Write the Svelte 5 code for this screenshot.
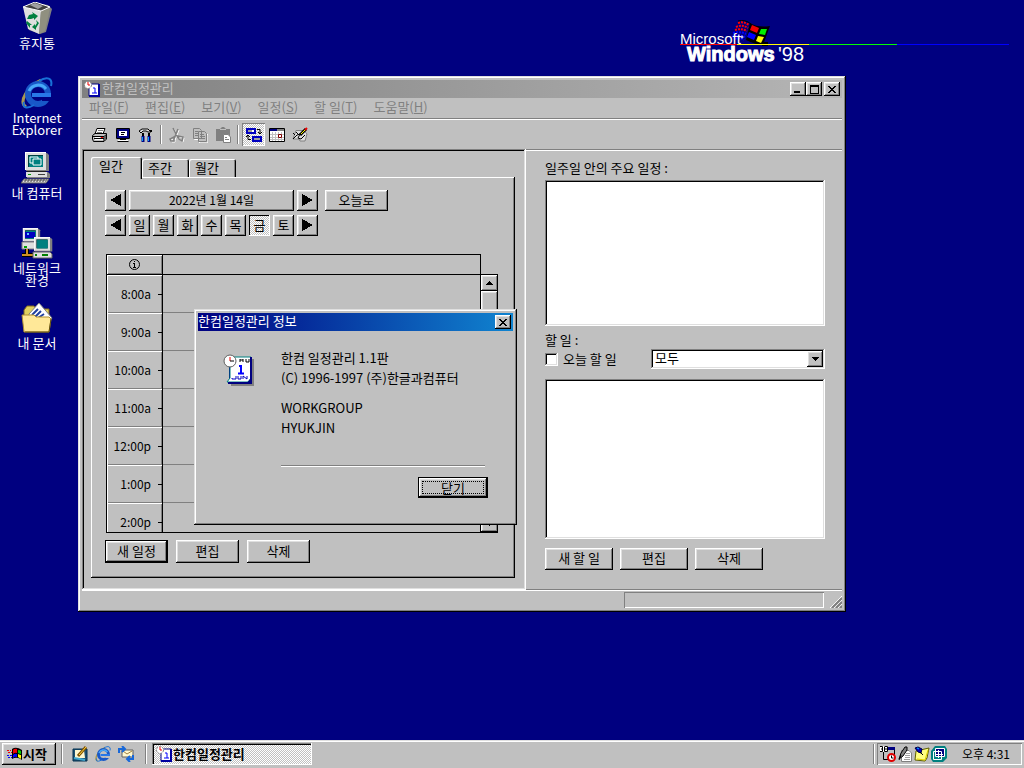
<script lang="ts">
	type Shortcut = { icon: string; label: string };

	const shortcuts: Shortcut[] = [
		{ icon: 'bin', label: '휴지통' },
		{ icon: 'ie', label: 'Internet Explorer' },
		{ icon: 'computer', label: '내 컴퓨터' },
		{ icon: 'network', label: '네트워크 환경' },
		{ icon: 'documents', label: '내 문서' }
	];

	const menus = [
		{ label: '파일', key: 'F' },
		{ label: '편집', key: 'E' },
		{ label: '보기', key: 'V' },
		{ label: '일정', key: 'S' },
		{ label: '할 일', key: 'T' },
		{ label: '도움말', key: 'H' }
	];

	const toolGroups = [
		['print', 'screen', 'tools'],
		['cut', 'copy', 'paste'],
		['swap', 'calendar', 'memo']
	];

	const largeIcons = ['ie', 'bin', 'computer', 'network', 'documents', 'planner'];
	const tabs = ['일간', '주간', '월간'];
	const days = ['일', '월', '화', '수', '목', '금', '토'];
	const hours = ['8:00a', '9:00a', '10:00a', '11:00a', '12:00p', '1:00p', '2:00p'];
	const quickLaunch = ['desk', 'ie', 'mail'];
	const tray = ['scheduler', 'pen', 'note', 'display'];

	let activeTab = $state('일간');
	let activeDay = $state('금');
	let todayOnly = $state(false);
	let filter = $state('모두');
	let showAbout = $state(true);
</script>

{#snippet pc()}
	<path d="M5 1H26L28 3V19H5Z" fill="#808080" />
	<path d="M4 0H25V18H4Z" fill="#dfdfdf" />
	<path d="M4 0H25V1H5V18H4Z" fill="#fff" />
	<path d="M7 3H22V15H7Z" fill="#004040" />
	<path d="M8 4H22V15H8Z" fill="#008080" />
{/snippet}

{#snippet icon(name: string, size: number)}
	<svg width={size} height={size} viewBox={largeIcons.includes(name) ? '0 0 32 32' : '0 0 16 16'} aria-hidden="true">
		{#if name === 'bin'}
			<path d="M5 6L14 1L27 3L31 7L25 30L19 32L8 28Z" fill="#808080" />
			<path d="M2 5L20 9L18 32L7 27Z" fill="#dfdfdf" />
			<path d="M20 9L29 6L24 29L18 32Z" fill="#909080" />
			<path d="M2 5L14 0L29 5L20 9Z" fill="#404040" stroke="#fff" />
			<path d="M9 3L14 1L22 4L17 7Z" fill="#a0a0a0" />
			<path d="M6 17L8 13L12 12L11 10L17 14L13 18V16L10 17Z M6 19L11 23H9V26L5 21Z M15 18L18 21L15 26V28L11 25L14 22V24L16 21Z" fill="#008040" />
		{:else if name === 'ie'}
			<path d="M5 30C-3 25 7 9 20 3" fill="none" stroke="#a89850" stroke-width="3" />
			<circle cx="17" cy="17" r="10" fill="none" stroke="#1858c8" stroke-width="6" />
			<path d="M8 14A10 10 0 0 1 25 12" fill="none" stroke="#48a8f8" stroke-width="3" />
			<path d="M11 18H30" stroke="#2878e8" stroke-width="4" />
			<path d="M21 20H31V24H21Z" fill={size > 16 ? '#000080' : '#c0c0c0'} />
			<path d="M18 4C26 -1 32 1 30 9M3 25C1 31 6 32 13 28" fill="none" stroke="#1870d8" stroke-width="2" />
		{:else if name === 'computer'}
			{@render pc()}
			<path d="M9 5H17V11H9Z" fill="#008080" stroke="#fff" />
			<path d="M12 7H20V13H12Z" fill="#008080" stroke="#fff" />
			<path d="M6 19H25V20H6Z" fill="#202020" />
			<path d="M6 20H27L29 22V26H6Z" fill="#808080" />
			<path d="M5 20H26V25H5Z" fill="#dfdfdf" />
			<path d="M7 22H10V23H7Z" fill="#00a000" />
			<path d="M17 22H24V23H17Z" fill="#404040" />
			<path d="M3 27H28L25 31H0Z" fill="#dfdfdf" stroke="#606060" />
			<path d="M3 29H25M4 28H26" stroke="#404040" stroke-dasharray="2 1" />
		{:else if name === 'network'}
			<g transform="translate(-1 1) scale(.72)">{@render pc()}</g>
			<path d="M4 5H14V11H4Z" fill="#0000c0" />
			<path d="M6 6H8V8H6Z" fill="#60c0ff" />
			<path d="M1 15H18V22H1Z" fill="#dfdfdf" stroke="#808080" />
			<path d="M3 19H6V21H3Z" fill="#00a000" />
			<path d="M6 22V28M1 28H13" stroke="#000" stroke-width="4" />
			<path d="M6 22V28M1 28H13" stroke="#d09020" stroke-width="2" />
			<g transform="translate(10 10) scale(.76)">{@render pc()}</g>
			<path d="M12 25H29L31 27V31H12Z" fill="#dfdfdf" stroke="#606060" />
			<path d="M21 28H27M14 28H16" stroke="#008000" stroke-width="2" />
		{:else if name === 'documents'}
			<path d="M3 8L6 4H13L15 7H28V26H3Z" fill="#e0d060" stroke="#806820" />
			<path d="M8 12L18 1L31 16L25 24H8Z" fill="#fff" stroke="#808080" />
			<path d="M11 13L17 7M14 15L20 9M17 16L23 12" stroke="#2040a0" stroke-width="2" />
			<path d="M1 13H13L15 15H28L30 17L28 30H3Z" fill="#ffe898" stroke="#b09030" />
			<path d="M4 30H28L30 17" fill="none" stroke="#605010" />
		{:else if name === 'planner'}
			<path d="M8 5H31V32H8Z" fill="#808080" />
			<path d="M6 4H29V30H6Z" fill="#000080" />
			<path d="M7 3H28V24L25 28H4L7 24Z" fill="#fff" stroke="#008080" />
			<path d="M28 3V26L25 29H5" fill="none" stroke="#000080" stroke-width="2" />
			<path d="M17 5V8M20 5V8M17 6H20M23 5V8H26V5" fill="none" stroke="#000" />
			<path d="M16 12H18V19M15 19.5H21M18 11V19" fill="none" stroke="#0000ff" stroke-width="2" />
			<path d="M13 22V25H9V24M15 22V25H18V22M20 25V22L24 25V22" fill="none" stroke="#0000c0" />
			<circle cx="7" cy="7" r="6" fill="#fff" stroke="#606060" />
			<path d="M7 3V7" stroke="#f00000" />
			<path d="M7 7H11" stroke="#000" />
		{:else if name === 'planner16'}
			<path d="M5 3H15V15H5Z" fill="#fff" stroke="#000080" />
			<path d="M15 3V15H5" fill="none" stroke="#0000a0" stroke-width="2" />
			<path d="M9 7H11V12M8 12H13" fill="none" stroke="#0000ff" />
			<circle cx="4" cy="4" r="3.5" fill="#fff" stroke="#808080" stroke-dasharray="2 1" />
			<path d="M4 1V4H6" fill="none" stroke="#f00000" />
		{:else if name === 'flag'}
			<path d="M6 3Q10 0 16 4V14Q11 10 6 13Z" fill="#000" />
			<path d="M7 4Q9 2 11 3V7Q9 6 7 8Z" fill="#f00000" />
			<path d="M12 4Q14 4 15 5V8Q14 8 12 7Z" fill="#00d000" />
			<path d="M7 9Q9 7 11 8V11Q9 10 7 12Z" fill="#0000ff" />
			<path d="M12 8Q14 9 15 9V13L12 11Z" fill="#ffff00" />
			<path d="M1 4.5H5M2 6.5H6" stroke="#f00000" stroke-dasharray="2 1" />
			<path d="M1 9.5H6M2 11.5H6" stroke="#0000ff" stroke-dasharray="2 1" />
		{:else if name === 'print'}
			<path d="M5 1.5H13L11 7H3Z" fill="#fff" stroke="#000" />
			<path d="M6 3.5H11M5 5.5H10" stroke="#808080" />
			<path d="M.5 8.5L3 6.5H14.5V12L12 14.5H1.5L.5 12Z" fill="#c0c0c0" stroke="#000" />
			<path d="M1 9.5H12L15 7M12 10V14M2 11.5H12M14 9V12" fill="none" stroke="#000" />
			<path d="M3 10.5H8M3 12.5H11" stroke="#fff" />
			<path d="M9 10.5H11" stroke="#ff0000" />
		{:else if name === 'screen'}
			<path d="M1.5 1.5H14.5V11.5H1.5Z" fill="#fff" stroke="#000" />
			<path d="M3 3H13V10H3Z" fill="#fff" stroke="#000080" stroke-width="2" />
			<path d="M6 5.5H10M6 7.5H9" stroke="#000" />
			<path d="M5 12.5H11M2.5 14.5H13.5" stroke="#000" />
			<path d="M3 13.5H13" stroke="#fff" />
		{:else if name === 'tools'}
			<path d="M1 4L4 2H10L13 5L10 5L8 4H5L3 6Z" fill="#dfdfdf" stroke="#000" />
			<path d="M5 6V10M11 6V10M13 3V5" stroke="#000" stroke-width="2" />
			<path d="M5 9V15M11 9V15" stroke="#000080" stroke-width="3" />
			<path d="M4.5 10V14M10.5 10V14" stroke="#00a0ff" />
		{:else if name === 'cut'}
			<g fill="none" stroke="#fff" transform="translate(1 1)">
				<path d="M4 1L9 11M9 2L5 12M5 10L1 12L2 14H5ZM9 9L14 10L13 14L10 12Z" />
			</g>
			<path d="M4 1L9 11M9 2L5 12M5 10L1 12L2 14H5ZM9 9L14 10L13 14L10 12Z" fill="none" stroke="#808080" stroke-width="1.5" />
		{:else if name === 'copy'}
			<path d="M2.5 2.5H8.5L10.5 4.5V12.5H2.5ZM7.5 5.5H13L16 8V16H7.5Z" fill="#c0c0c0" stroke="#fff" />
			<path d="M1.5 1.5H7.5L9.5 3.5V11.5H1.5ZM6.5 4.5H12.5L14.5 6.5V14.5H6.5Z" fill="#c0c0c0" stroke="#808080" />
			<path d="M3 4.5H6M3 6.5H6M3 8.5H6M8 7.5H12M8 9.5H13M8 11.5H13" stroke="#808080" />
		{:else if name === 'paste'}
			<path d="M1 2H5L7 0H9L11 2H15V14H1Z" fill="#808080" />
			<path d="M5 2.5H11" stroke="#c0c0c0" />
			<path d="M8.5 7.5H13L15.5 10V15.5H8.5Z" fill="#fff" stroke="#808080" />
			<path d="M10 10.5H12M10 12.5H14" stroke="#808080" />
		{:else if name === 'swap'}
			<path d="M1 2H9V6H1ZM7 10H15V14H7Z" fill="#fff" stroke="#0000c0" stroke-width="2" />
			<path d="M2 3H6V5H2ZM8 11H14V13H8Z" fill="#a0a0a0" />
			<path d="M11 2.5H14V6M12 5L14 7L16 5M5 12.5H2V9M0 10L2 8L4 10" fill="none" stroke="#000" />
		{:else if name === 'calendar'}
			<path d="M.5 1.5H15.5V14.5H.5Z" fill="#fff" stroke="#000" />
			<path d="M1 2H8V4H1Z" fill="#000080" />
			<path d="M8 2H15V4H8Z" fill="#808080" />
			<path d="M3.5 5V14M6.5 5V14M9.5 5V14M12.5 5V14M1 7.5H15M1 10.5H15M1 12.5H15" stroke="#c0c0c0" />
			<path d="M9.5 7.5H12.5V10.5H9.5Z" fill="#fff" stroke="#800000" />
		{:else if name === 'memo'}
			<path d="M4 3.5H12L15 7L13 14H8L7 12H1Z" fill="#dfdfdf" stroke="#808080" />
			<path d="M1 12L5 8L8 7L6 11L9 12L13 8" fill="none" stroke="#000" />
			<path d="M8 8L14 2" stroke="#000" stroke-width="3" />
			<path d="M9 7L14 2" stroke="#ffff00" />
			<path d="M13 3L15 1" stroke="#f00000" stroke-width="2" />
			<path d="M1 6L3 8M4 5L6 7" stroke="#000" />
		{:else if name === 'desk'}
			<path d="M1 3H15V15H1Z" fill="#205070" stroke="#003050" />
			<path d="M3 4H12L13 12H3Z" fill="#fff8d0" />
			<path d="M2 12L13 14" stroke="#40a8d0" stroke-width="2" />
			<path d="M6 10L14 1" stroke="#805000" stroke-width="3" />
			<path d="M7 9L14 1" stroke="#ffd840" />
		{:else if name === 'mail'}
			<path d="M4 4H15V11H4Z" fill="#fff8d0" stroke="#606060" />
			<path d="M5 5L9 8L14 5" fill="none" stroke="#a08040" />
			<path d="M1 7V3H6M4 0L7 3L4 6M15 9V13H10M12 10L9 13L12 16" fill="none" stroke="#1868d8" stroke-width="2" />
		{:else if name === 'scheduler'}
			<path d="M3.5 3.5H14.5V13.5H3.5Z" fill="#c0c0c0" stroke="#000" />
			<path d="M7 1H15V4H7Z" fill="#000080" />
			<path d="M0 0H8V6H0Z" fill="#fff" />
			<path d="M0 .5H2.5V5.5H0M1 3H2M5 .5H7.5V5.5H4.5V.5M5 3H7" fill="none" stroke="#000" />
			<circle cx="11.5" cy="11.5" r="3.5" fill="#fff" stroke="#e00000" stroke-width="2" />
			<path d="M11.5 9.5V12H13.5" fill="none" stroke="#000" />
		{:else if name === 'pen'}
			<path d="M4.5 4.5H12L14.5 7V15.5H4.5Z" fill="#fff" stroke="#808080" />
			<path d="M9 7.5H13M8 9.5H13M8 11.5H13M7 13.5H13" stroke="#a0a0a0" />
			<path d="M2 13L4 7L8 1H10V4L6 10Z" fill="#808080" stroke="#000" />
			<path d="M2 14L4 9" stroke="#000" />
		{:else if name === 'note'}
			<path d="M2 5L15 2L13 12L11 15L1 14Z" fill="#ffff80" stroke="#606000" />
			<path d="M3 13L11 14L14 4" fill="none" stroke="#e0d000" />
			<path d="M1 2L4 1L8 3L7 7L4 6Z" fill="#0000c0" stroke="#000040" />
			<path d="M3 2L5 3" stroke="#00c0ff" />
			<path d="M6 6L9 9" stroke="#000" />
		{:else if name === 'display'}
			<path d="M4 0H14L16 3V12L12 16H2L0 13V5Z" fill="#008080" />
			<path d="M4.5 2.5H13.5V10.5H4.5Z" fill="#000080" stroke="#fff" />
			<path d="M2.5 5.5H10.5V13.5H2.5Z" fill="none" stroke="#fff" />
			<path d="M7.5 4V12M4 8.5H12" stroke="#fff" />
		{/if}
	</svg>
{/snippet}

{#snippet arrow(dir: 'left' | 'right')}
	<svg width="11" height="12" viewBox="0 0 11 12" shape-rendering="crispEdges" aria-hidden="true">
		<path d={dir === 'left' ? 'M11 0V12L0 6Z' : 'M0 0V12L11 6Z'} />
	</svg>
{/snippet}

{#snippet smallArrow(dir: 'up' | 'down')}
	<svg width="7" height="4" viewBox="0 0 7 4" shape-rendering="crispEdges" aria-hidden="true">
		<path d={dir === 'up' ? 'M3 0H4V1H5V2H6V3H7V4H0V3H1V2H2V1H3Z' : 'M0 0H7V1H6V2H5V3H4V4H3V3H2V2H1V1H0Z'} />
	</svg>
{/snippet}

{#snippet cross()}
	<svg width="8" height="7" viewBox="0 0 8 7" shape-rendering="crispEdges" aria-hidden="true">
		<path d="M0 0H2V1H3V2H5V1H6V0H8V1H7V2H6V3H5V4H6V5H7V6H8V7H6V6H5V5H3V6H2V7H0V6H1V5H2V4H3V3H2V2H1V1H0Z" />
	</svg>
{/snippet}

<div class="screen">
	<main class="desktop">
		<nav class="shortcuts" aria-label="바탕 화면">
			{#each shortcuts as item}
				<a class="shortcut" href="#{item.icon}">
					{@render icon(item.icon, 32)}
					<span>{item.label}</span>
				</a>
			{/each}
		</nav>

		<svg class="wallpaper" width="330" height="46" viewBox="0 0 330 46">
			<path d="M58 3Q64 1 69 5M56 7Q62 4 68 8M55 10Q61 8 67 11" fill="none" stroke="#ff0000" stroke-width="2" stroke-dasharray="2 1" />
			<path d="M53 13Q60 11 66 14M52 17Q59 14 65 17M55 19Q60 17 64 20" fill="none" stroke="#0000ff" stroke-width="2" stroke-dasharray="2 1" />
			<path d="M70 3Q78 8 90 6L83 25Q76 25 66 20Z" fill="#000" />
			<path d="M58 1Q65 -1 71 4" fill="none" stroke="#000" />
			<path d="M72 5L79 8L77 13L70 10Z" fill="#f00000" />
			<path d="M81 9H87L85 15L79 14Z" fill="#00f000" />
			<path d="M69 12L76 15L74 20L67 17Z" fill="#0000ff" />
			<path d="M78 16L84 17L81 23L76 21Z" fill="#ffff00" />
			<path d="M82 22H88V26H82Z" fill="#000" />
			<text class="brand" x="0" y="24">Microsoft</text>
			<circle cx="62" cy="17" r="1" fill="none" stroke="#fff" />
			<g shape-rendering="crispEdges">
				<path d="M0 24.5H57" stroke="#ff0000" />
				<path d="M57 24.5H129" stroke="#ffff00" />
				<path d="M129 24.5H217" stroke="#00ff00" />
				<path d="M217 24.5H329" stroke="#0000ff" />
			</g>
			<text class="product" x="7" y="41">Windows</text>
			<text class="edition" x="98" y="41">'98</text>
		</svg>

		<section class="window planner" aria-label="한컴일정관리">
			<header class="titlebar inactive">
				{@render icon('planner16', 16)}
				<h1>한컴일정관리</h1>
				<div class="controls">
					<button class="control" aria-label="최소화">
						<svg width="8" height="7" shape-rendering="crispEdges"><path d="M0 5H6V7H0Z" /></svg>
					</button>
					<button class="control" aria-label="최대화">
						<svg width="9" height="9" shape-rendering="crispEdges"><path d="M0 0H9V9H0ZM1 2V8H8V2Z" fill-rule="evenodd" /></svg>
					</button>
					<button class="control close" aria-label="닫기">{@render cross()}</button>
				</div>
			</header>

			<div class="menubar">
				{#each menus as menu}
					<button class="menu">{menu.label}(<u>{menu.key}</u>)</button>
				{/each}
			</div>

			<div class="toolbar">
				{#each toolGroups as group, i}
					{#if i > 0}<span class="separator"></span>{/if}
					<div class="tool-group">
						{#each group as tool}
							<button class="tool" class:pressed={tool === 'swap'} aria-label={tool}>
								{@render icon(tool, 16)}
							</button>
						{/each}
					</div>
				{/each}
			</div>

			<div class="panes">
				<section class="pane-left">
					<div class="tabs" role="tablist">
						{#each tabs as tab}
							<button class="tab" class:active={tab === activeTab} role="tab" aria-selected={tab === activeTab} onclick={() => (activeTab = tab)}>
								{tab}
							</button>
						{/each}
					</div>
					<div class="page">
						<div class="date-row">
							<button class="btn square" aria-label="이전 날">{@render arrow('left')}</button>
							<button class="btn date">2022년 1월 14일</button>
							<button class="btn square" aria-label="다음 날">{@render arrow('right')}</button>
							<button class="btn today">오늘로</button>
						</div>
						<div class="date-row">
							<button class="btn square" aria-label="이전 주">{@render arrow('left')}</button>
							{#each days as day}
								<button class="btn square" class:pressed={day === activeDay} onclick={() => (activeDay = day)}>{day}</button>
							{/each}
							<button class="btn square" aria-label="다음 주">{@render arrow('right')}</button>
						</div>

						<div class="schedule">
							<div class="sheet">
								<table>
									<thead>
										<tr>
											<th class="time-head">
												<svg width="11" height="11" viewBox="0 0 11 11" aria-hidden="true">
													<circle cx="5.5" cy="5.5" r="5" fill="none" stroke="#000" />
													<path d="M5 2H6V3H5ZM4 4H6V8H7V9H4V8H5V5H4Z" />
												</svg>
											</th>
											<th></th>
										</tr>
									</thead>
									<tbody>
										{#each hours as hour}
											<tr>
												<th scope="row" class="time"><div>{hour}<i></i></div></th>
												<td></td>
											</tr>
										{/each}
									</tbody>
								</table>
							</div>
							<div class="scrollbar">
								<button class="scroll-btn" aria-label="위로">{@render smallArrow('up')}</button>
								<span class="thumb"></span>
								<span class="track"></span>
								<button class="scroll-btn" aria-label="아래로">{@render smallArrow('down')}</button>
							</div>
						</div>

						<div class="actions">
							<button class="btn default">새 일정</button>
							<button class="btn">편집</button>
							<button class="btn">삭제</button>
						</div>
					</div>
				</section>

				<section class="pane-right">
					<h2 id="week-label">일주일 안의 주요 일정 :</h2>
					<div class="list week" role="listbox" aria-labelledby="week-label" tabindex="0"></div>
					<h2 id="todo-label">할 일 :</h2>
					<div class="filter-row">
						<label class="check">
							<input type="checkbox" bind:checked={todayOnly} />
							오늘 할 일
						</label>
						<div class="combo">
							<select bind:value={filter} aria-labelledby="todo-label">
								<option>모두</option>
							</select>
							<span class="combo-arrow">{@render smallArrow('down')}</span>
						</div>
					</div>
					<div class="list todo" role="listbox" aria-labelledby="todo-label" tabindex="0"></div>
					<div class="actions">
						<button class="btn">새 할 일</button>
						<button class="btn">편집</button>
						<button class="btn">삭제</button>
					</div>
				</section>
			</div>

			<footer class="statusbar">
				<span class="status-cell"></span>
				<svg width="12" height="12" viewBox="0 0 12 12" aria-hidden="true">
					<path d="M0 12L12 0M4 12L12 4M8 12L12 8" stroke="#fff" />
					<path d="M2 12L12 2M6 12L12 6M10 12L12 10" stroke="#808080" stroke-width="2" />
				</svg>
			</footer>
		</section>

		{#if showAbout}
			<div class="window about" role="dialog" aria-label="한컴일정관리 정보">
				<header class="titlebar">
					<h1>한컴일정관리 정보</h1>
					<div class="controls">
						<button class="control" aria-label="닫기" onclick={() => (showAbout = false)}>{@render cross()}</button>
					</div>
				</header>
				<div class="about-body">
					<div class="about-icon">{@render icon('planner', 32)}</div>
					<div class="about-info">
						<p>한컴 일정관리 1.1판<br />(C) 1996-1997 (주)한글과컴퓨터</p>
						<p>WORKGROUP<br />HYUKJIN</p>
						<hr />
						<button class="btn default ok" onclick={() => (showAbout = false)}><span>닫기</span></button>
					</div>
				</div>
			</div>
		{/if}
	</main>

	<footer class="taskbar">
		<button class="start btn">{@render icon('flag', 16)}시작</button>
		<span class="handle"></span>
		<div class="quick">
			{#each quickLaunch as item}
				<button class="quick-item" aria-label={item}>{@render icon(item, 16)}</button>
			{/each}
		</div>
		<span class="handle"></span>
		<button class="task">{@render icon('planner16', 16)}한컴일정관리</button>
		<span class="handle tray-handle"></span>
		<div class="tray">
			{#each tray as item}
				{@render icon(item, 16)}
			{/each}
			<time>오후 4:31</time>
		</div>
	</footer>
</div>

<style>
	:global(body) {
		background: #000080;
	}

	.screen {
		--face: #c0c0c0;
		--raised: inset -1px -1px #000, inset 1px 1px #fff, inset -2px -2px #808080, inset 2px 2px #dfdfdf;
		--sunken: inset -1px -1px #fff, inset 1px 1px #808080, inset -2px -2px #dfdfdf, inset 2px 2px #000;
		--checker: repeating-conic-gradient(#fff 0 25%, #c0c0c0 0 50%) 0 0 / 2px 2px;
		display: flex;
		flex-direction: column;
		min-height: 100vh;
		font: 13px/16px 'Noto Sans CJK KR', sans-serif;
		color: #000;
	}

	button,
	select {
		font: inherit;
		color: inherit;
		border: 0;
		padding: 0;
		background: none;
	}

	h1,
	h2,
	p {
		margin: 0;
		font: inherit;
	}

	svg {
		display: block;
		flex: none;
	}

	.desktop {
		position: relative;
		flex: 1;
		min-height: 612px;
	}

	.shortcuts {
		display: grid;
		grid-auto-rows: 75px;
		width: 74px;
		padding-top: 2px;
	}

	.shortcut {
		display: flex;
		flex-direction: column;
		align-items: center;
		gap: 3px;
		padding: 0 8px;
		color: #fff;
		line-height: 12px;
		text-align: center;
		text-decoration: none;
		word-break: keep-all;
	}

	.wallpaper {
		position: absolute;
		top: 20px;
		right: 14px;
		fill: #fff;
		font-family: 'Liberation Sans', sans-serif;
	}

	.brand {
		font-size: 15px;
	}

	.product {
		font-size: 20px;
		font-weight: bold;
		stroke: #fff;
	}

	.edition {
		font-size: 20px;
	}

	.window {
		position: absolute;
		box-sizing: border-box;
		padding: 4px;
		background: var(--face);
		box-shadow: inset -1px -1px #000, inset 1px 1px #dfdfdf, inset -2px -2px #808080, inset 2px 2px #fff;
	}

	.planner {
		top: 76px;
		left: 78px;
		right: 178px;
		min-width: 720px;
	}

	.titlebar {
		display: flex;
		align-items: center;
		height: 18px;
		padding-right: 2px;
		background: linear-gradient(90deg, #000080, #1084d0);
		color: #fff;
	}

	.titlebar h1 {
		padding-bottom: 2px;
	}

	.titlebar.inactive {
		gap: 2px;
		padding-left: 2px;
		background: linear-gradient(90deg, #808080, #b5b5b5);
		color: #c0c0c0;
	}

	.controls {
		display: flex;
		margin-left: auto;
	}

	.control {
		display: grid;
		place-items: center;
		width: 16px;
		height: 14px;
		background: var(--face);
		box-shadow: var(--raised);
	}

	.control.close {
		margin-left: 2px;
	}

	.menubar {
		display: flex;
		gap: 4px;
		height: 20px;
		padding-left: 1px;
		border-bottom: 1px solid #808080;
	}

	.menu {
		padding: 0 6px 2px;
		color: #808080;
	}

	.toolbar {
		display: flex;
		align-items: center;
		gap: 3px;
		height: 29px;
		padding-left: 6px;
		border-top: 1px solid #fff;
	}

	.tool-group {
		display: flex;
	}

	.tool {
		display: grid;
		place-items: center;
		width: 23px;
		height: 23px;
	}

	.tool.pressed {
		background: var(--checker);
		box-shadow: inset 1px 1px #808080, inset -1px -1px #fff;
	}

	.separator {
		width: 1px;
		height: 19px;
		border-left: 1px solid #808080;
		background: #fff;
	}

	.panes {
		display: grid;
		grid-template-columns: 444fr 316fr;
	}

	.pane-left {
		padding: 8px 11px 12px 9px;
		box-shadow: var(--sunken);
	}

	.tabs {
		display: flex;
		align-items: flex-end;
		height: 22px;
		margin-bottom: -2px;
		position: relative;
	}

	.tab {
		width: 47px;
		height: 18px;
		padding-left: 6px;
		text-align: left;
		background: var(--face);
		border-radius: 2px 2px 0 0;
		box-shadow: inset 1px 1px #fff, inset -1px 0 #000, inset -2px 0 #808080;
		margin-bottom: 2px;
	}

	.tab.active {
		width: 51px;
		height: 22px;
		padding: 0 0 4px 8px;
		margin-bottom: 0;
	}

	.page {
		padding: 13px 17px 15px 14px;
		box-shadow: inset -1px -1px #000, inset 1px 1px #fff, inset -2px -2px #808080;
	}

	.date-row {
		display: flex;
		gap: 3px;
		margin-bottom: 4px;
	}

	.btn {
		box-sizing: border-box;
		background: var(--face);
		box-shadow: var(--raised);
	}

	.btn.square {
		display: grid;
		place-items: center;
		width: 21px;
		height: 21px;
		padding-bottom: 2px;
	}

	.btn.pressed {
		background: var(--checker);
		box-shadow: inset -1px -1px #fff, inset 1px 1px #000;
	}

	.btn.date {
		width: 165px;
		padding-bottom: 2px;
		font-size: 12px;
	}

	.btn.today {
		width: 63px;
		margin-left: 4px;
		padding-bottom: 2px;
	}

	.schedule {
		display: flex;
		height: 279px;
		margin: 18px 0 7px;
		padding-left: 1px;
	}

	.sheet {
		flex: 1;
		box-sizing: border-box;
		overflow: hidden;
		border: 1px solid #000;
	}

	table {
		width: 100%;
		border-collapse: separate;
		border-spacing: 0;
		table-layout: fixed;
	}

	th,
	td {
		box-sizing: border-box;
		padding: 0;
		font-weight: normal;
	}

	thead th {
		height: 20px;
		border-bottom: 1px solid #000;
	}

	.time-head,
	.time {
		width: 56px;
		border-right: 1px solid #000;
		box-shadow: inset 1px 1px #fff, inset -1px -1px #808080;
	}

	.time-head svg {
		margin: auto;
	}

	.time,
	td {
		height: 38px;
	}

	td {
		border-bottom: 1px solid #808080;
	}

	.time div {
		display: flex;
		align-items: center;
		justify-content: flex-end;
		gap: 7px;
		font-size: 12px;
	}

	.time i {
		width: 4px;
		height: 1px;
		background: #000;
	}

	.scrollbar {
		display: flex;
		flex-direction: column;
		width: 17px;
		margin-top: 20px;
		background: #dfdfdf;
		box-shadow: inset -1px -1px #000, inset 0 1px #000;
		padding: 1px 0;
		box-sizing: border-box;
	}

	.scroll-btn {
		display: grid;
		place-items: center;
		height: 16px;
		background: var(--face);
		box-shadow: var(--raised);
	}

	.thumb {
		height: 60px;
		background: var(--face);
		box-shadow: var(--raised);
	}

	.track {
		flex: 1;
	}

	.actions {
		display: flex;
		gap: 8px;
	}

	.actions .btn {
		width: 63px;
		height: 23px;
		padding-bottom: 2px;
	}

	.btn.default {
		border: 1px solid #000;
	}

	.pane-right {
		display: flex;
		flex-direction: column;
		padding: 10px 17px 19px 19px;
		border-top: 1px solid #808080;
		border-bottom: 1px solid #808080;
		box-shadow: inset 0 1px #fff;
	}

	.list {
		background: #fff;
		box-shadow: var(--sunken);
	}

	.week {
		height: 146px;
		margin: 4px 0 6px;
	}

	.todo {
		flex: 1;
		margin: 10px 0 9px;
	}

	.filter-row {
		display: flex;
		align-items: center;
		justify-content: space-between;
		margin-top: 1px;
	}

	.check {
		display: flex;
		align-items: center;
		gap: 5px;
	}

	.check input {
		appearance: none;
		width: 13px;
		height: 13px;
		margin: 0;
		background: #fff;
		box-shadow: var(--sunken);
	}

	.check input:checked {
		background: radial-gradient(#000 0 3px, #fff 4px);
	}

	.combo {
		position: relative;
		width: 174px;
		height: 20px;
	}

	.combo select {
		appearance: none;
		width: 100%;
		height: 100%;
		padding: 0 20px 2px 4px;
		background: #fff;
		box-shadow: var(--sunken);
		border-radius: 0;
	}

	.combo-arrow {
		position: absolute;
		top: 2px;
		right: 2px;
		bottom: 2px;
		display: grid;
		place-items: center;
		width: 16px;
		background: var(--face);
		box-shadow: var(--raised);
		pointer-events: none;
	}

	.pane-right .actions {
		gap: 7px;
	}

	.pane-right .actions .btn {
		width: 68px;
		height: 22px;
	}

	.statusbar {
		display: flex;
		align-items: flex-end;
		justify-content: flex-end;
		gap: 6px;
		height: 17px;
		border-top: 1px solid #fff;
	}

	.status-cell {
		width: 200px;
		height: 16px;
		box-shadow: inset 1px 1px #808080, inset -1px -1px #fff;
	}

	.about {
		top: 309px;
		left: 194px;
		min-width: 323px;
	}

	.about-body {
		display: flex;
		gap: 26px;
		padding: 17px 25px 23px;
	}

	.about-icon {
		padding-top: 6px;
	}

	.about-info {
		display: flex;
		flex: 1;
		flex-direction: column;
		line-height: 20px;
	}

	.about-info p + p {
		margin-top: 10px;
	}

	hr {
		align-self: stretch;
		height: 1px;
		margin: 27px 3px 10px 0;
		border: 0;
		border-top: 1px solid #808080;
		background: #fff;
	}

	.ok {
		align-self: flex-end;
		width: 70px;
		height: 21px;
		padding: 3px;
	}

	.ok span {
		display: block;
		height: 11px;
		border: 1px dotted #000;
		line-height: 11px;
	}

	.taskbar {
		display: flex;
		align-items: center;
		height: 24px;
		padding: 1px 2px 2px;
		background: var(--face);
		border-top: 1px solid #dfdfdf;
		box-shadow: inset 0 1px #fff;
	}

	.start,
	.task {
		display: flex;
		align-items: center;
		gap: 1px;
		box-sizing: border-box;
		height: 22px;
		padding: 0 4px;
		font-weight: bold;
	}

	.start {
		width: 54px;
	}

	.task {
		width: 160px;
		background: var(--checker);
		box-shadow: inset -1px -1px #fff, inset 1px 1px #808080, inset 2px 2px #000;
	}

	.handle {
		width: 1px;
		height: 20px;
		margin: 0 5px;
		border-left: 1px solid #808080;
		background: #fff;
	}

	.quick {
		display: flex;
		padding-right: 3px;
	}

	.quick-item {
		display: grid;
		place-items: center;
		width: 23px;
		height: 22px;
	}

	.tray-handle {
		margin: 0 2px 0 auto;
	}

	.tray {
		display: flex;
		align-items: center;
		gap: 1px;
		box-sizing: border-box;
		height: 22px;
		padding: 0 12px 0 3px;
		box-shadow: inset 1px 1px #808080, inset -1px -1px #fff;
	}

	time {
		padding-left: 14px;
		font-size: 12px;
	}
</style>
